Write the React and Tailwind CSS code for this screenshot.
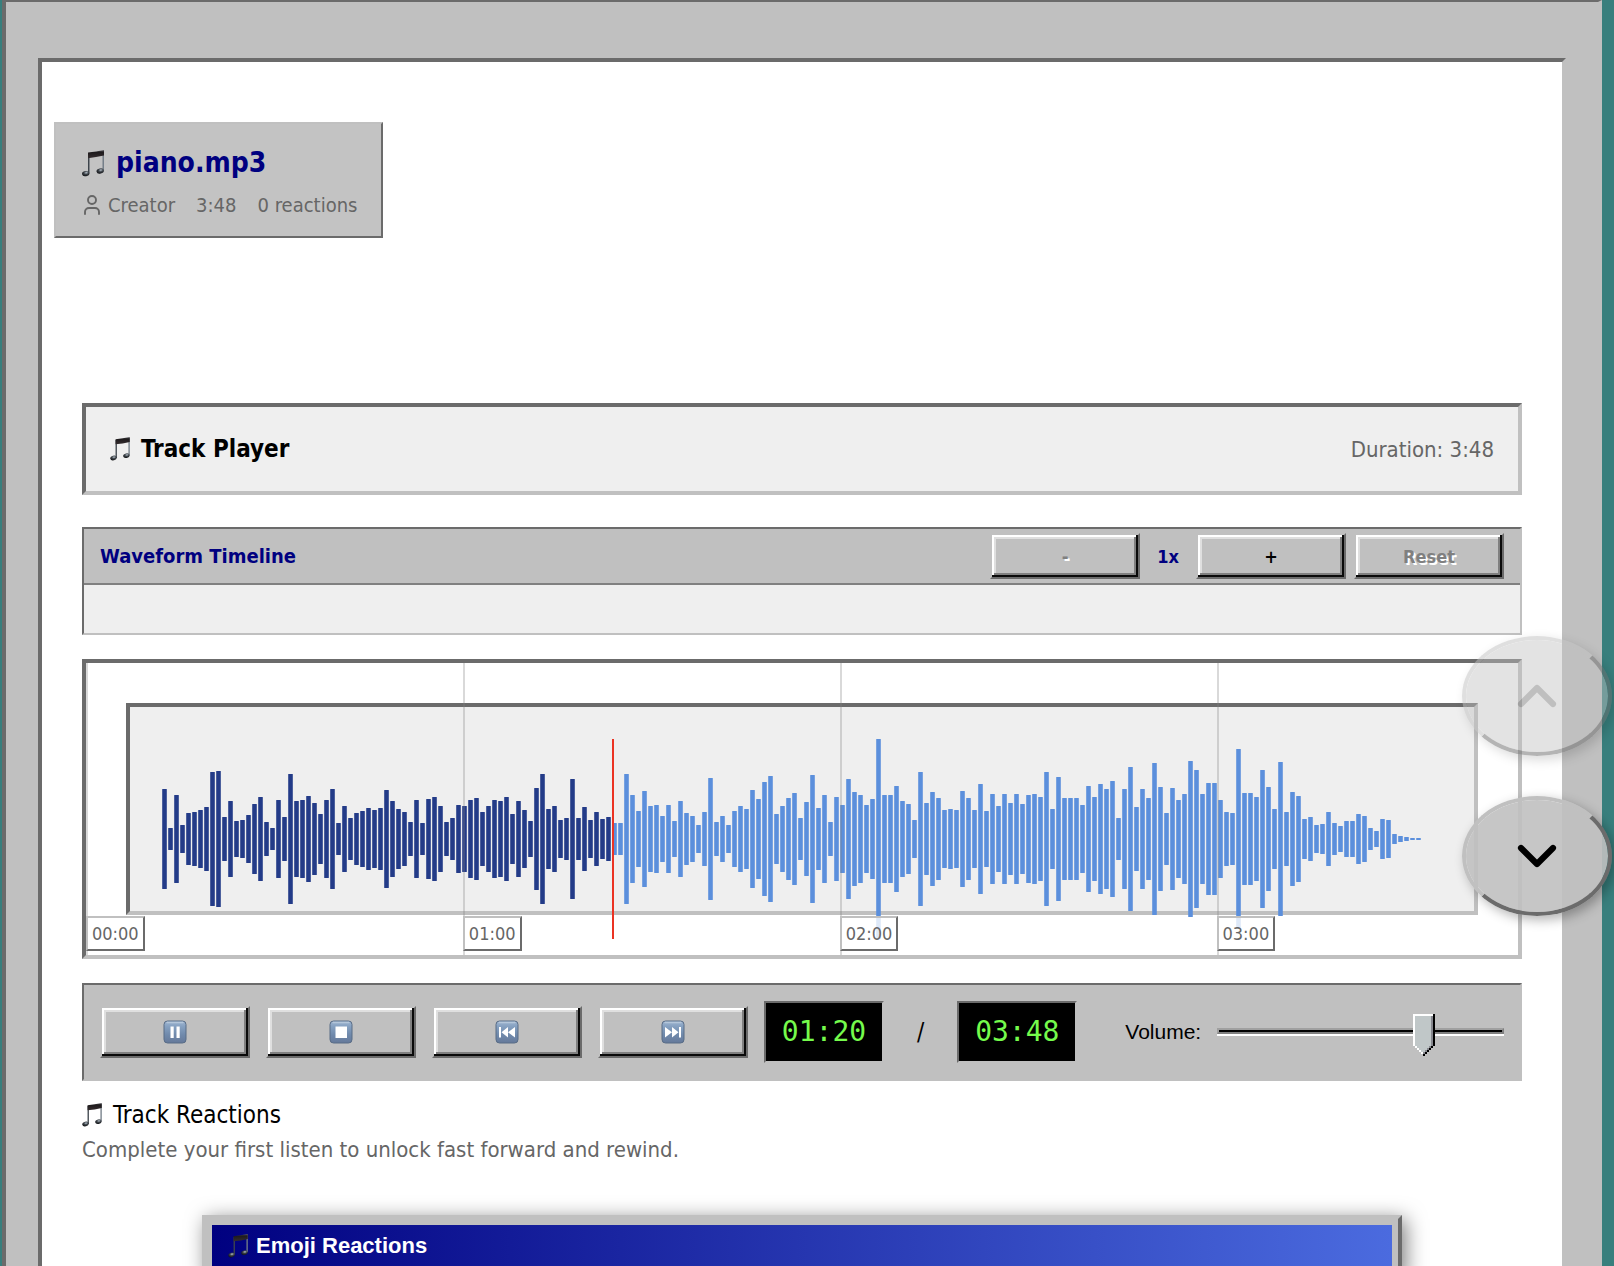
import { useState } from "react";
import { ChevronDown, ChevronUp, User } from "lucide-react";

const PEAKS = [
  50, 11, 44, 14, 26, 27, 29, 32, 67, 68, 22, 38, 18, 19, 24, 35, 42, 17, 11, 39, 22, 65, 38, 39, 43, 36, 25, 39, 50,
  16, 33, 21, 26, 28, 31, 29, 31, 49, 38, 30, 27, 17, 39, 16, 40, 42, 33, 17, 21, 34, 33, 39, 41, 27, 33, 39, 38, 42,
  25, 38, 29, 18, 51, 65, 30, 33, 19, 21, 60, 21, 32, 19, 27, 20, 22, 16, 16, 65, 44, 28, 48, 33, 34, 23, 34, 18, 38,
  26, 23, 14, 27, 61, 17, 23, 14, 28, 33, 30, 49, 40, 57, 63, 25, 33, 41, 46, 21, 37, 64, 31, 44, 17, 42, 34, 60, 47,
  44, 34, 40, 100, 44, 44, 53, 38, 35, 19, 67, 36, 47, 41, 29, 30, 29, 48, 41, 29, 55, 28, 45, 33, 45, 36, 45, 35, 44,
  45, 42, 67, 30, 62, 41, 41, 41, 34, 53, 42, 55, 50, 58, 21, 50, 72, 32, 50, 41, 76, 52, 26, 51, 39, 45, 78, 69, 45,
  56, 56, 39, 27, 26, 90, 46, 46, 42, 69, 52, 30, 77, 27, 47, 43, 20, 22, 14, 15, 27, 16, 13, 18, 18, 25, 23, 11, 8,
  20, 19, 5, 3, 2, 1, 1,
];
const PLAYED = 75;
const TRACK_SECONDS = 228;
const MARKS = [
  { label: "00:00", at: 0 },
  { label: "01:00", at: 60 },
  { label: "02:00", at: 120 },
  { label: "03:00", at: 180 },
];

function Notes({ className }) {
  return (
    <svg viewBox="0 0 22 27" className={className} aria-hidden="true">
      <defs>
        <linearGradient id="beam" x1="0" y1="0" x2="0" y2="1">
          <stop offset="0" stopColor="#6a6a70" />
          <stop offset="0.25" stopColor="#1d1a1c" />
          <stop offset="1" stopColor="#352d2f" />
        </linearGradient>
        <linearGradient id="stem" x1="0" y1="0" x2="1" y2="0">
          <stop offset="0" stopColor="#3b4249" />
          <stop offset="1" stopColor="#77818b" />
        </linearGradient>
        <radialGradient id="head" cx="0.6" cy="0.35" r="0.7">
          <stop offset="0" stopColor="#b4bec8" />
          <stop offset="0.45" stopColor="#3c4248" />
          <stop offset="1" stopColor="#0c0d0f" />
        </radialGradient>
      </defs>
      <path d="M6 3.500h1.500v20H6zM20.500 1H22v19.500h-1.500z" fill="url(#stem)" />
      <path d="M6 2.500Q14 1.800 22 0v5.600Q14 7.400 6 8.200z" fill="url(#beam)" />
      <ellipse cx="3.700" cy="23.600" rx="3.700" ry="2.600" transform="rotate(-12 3.700 23.600)" fill="url(#head)" />
      <ellipse cx="18.200" cy="21" rx="3.700" ry="2.600" transform="rotate(-12 18.200 21)" fill="url(#head)" />
    </svg>
  );
}

function KeyIcon({ children }) {
  return (
    <svg viewBox="0 0 24 24" className="size-6" aria-hidden="true">
      <defs>
        <linearGradient id="key" x1="0" y1="0" x2="0" y2="1">
          <stop offset="0" stopColor="#9db4cf" />
          <stop offset="0.25" stopColor="#86a1c1" />
          <stop offset="0.6" stopColor="#718bad" />
          <stop offset="1" stopColor="#65799a" />
        </linearGradient>
      </defs>
      <rect x="1" y="1" width="22" height="22" rx="3.500" fill="url(#key)" stroke="#586c86" />
      <path d="M4 2.500h16" stroke="#b4c6da" strokeWidth="1.500" strokeLinecap="round" />
      <g fill="#fff">{children}</g>
    </svg>
  );
}

function BevelButton({ className = "", ...props }) {
  return (
    <button
      type="button"
      className={
        "flex w-[150px] shrink-0 items-center justify-center border-2 border-t-[#c0c0c0] border-r-[#6b6b6b] border-b-[#6b6b6b] border-l-[#c0c0c0] bg-[#c0c0c0] font-bold text-black shadow-[inset_-2px_-2px_#0a0a0a,inset_2px_2px_#fff,inset_-4px_-4px_#808080,inset_4px_4px_#dfdfdf] disabled:text-[#808080] disabled:[text-shadow:2px_2px_0_#fff] " +
        className
      }
      {...props}
    />
  );
}

function Readout({ children }) {
  return (
    <output className="h-[62px] w-[120px] shrink-0 border-2 border-t-[#6b6b6b] border-r-[#c0c0c0] border-b-[#c0c0c0] border-l-[#6b6b6b] bg-black text-center font-['DejaVu_Sans_Mono',monospace] text-[28px] leading-[58px] text-[#75fb4c]">
      {children}
    </output>
  );
}

function RoundButton({ className = "", ...props }) {
  return (
    <button
      type="button"
      className={
        "flex h-[120px] w-[150px] items-center justify-center rounded-[50%] border-4 border-t-[#c0c0c0] border-r-[#6b6b6b] border-b-[#6b6b6b] border-l-[#c0c0c0] bg-[#c0c0c0]/90 bg-clip-padding text-black shadow-[4px_4px_12px_rgba(0,0,0,0.3)] " +
        className
      }
      {...props}
    />
  );
}

function VolumeSlider() {
  const [volume, setVolume] = useState(74);
  return (
    <div className="relative h-9 min-w-0 flex-1">
      <div className="h-[22px] border-b-2 border-white pt-3.5">
        <div className="h-1.5 border-2 border-t-[#a0a0a0] border-r-[#808080] border-b-[#808080] border-l-[#a0a0a0] bg-black" />
      </div>
      <div className="pointer-events-none absolute inset-y-0 right-[22px] left-0">
        <svg
          viewBox="0 0 11 21"
          className="absolute top-0 h-[42px] w-[22px]"
          style={{ left: volume + "%" }}
          shapeRendering="crispEdges"
          aria-hidden="true"
        >
          <path d="M0 0v16h1v1h1v1h1v1h1v1h1v1h1v-1h1v-1h1v-1h1v-1h1v-1h1V0z" fill="#fff" />
          <path d="M1 1v15h1v1h1v1h1v1h1v1h1v-1h1v-1h1v-1h1v-1h1V1z" fill="#c0c7c8" />
          <path d="M9 1h1v15H9v1H8v1H7v1H6v1H5v-1h1v-1h1v-1h1v-1h1z" fill="#87888f" />
          <path d="M10 0h1v16h-1v1H9v1H8v1H7v1H6v1H5v-1h1v-1h1v-1h1v-1h1v-1h1z" fill="#000" />
        </svg>
      </div>
      <input
        id="volume"
        type="range"
        value={volume}
        onChange={(e) => setVolume(Number(e.target.value))}
        className="absolute inset-0 size-full opacity-0"
      />
    </div>
  );
}

function Waveform() {
  return (
    <div className="relative border-4 border-t-[#6b6b6b] border-r-[#c0c0c0] border-b-[#c0c0c0] border-l-[#6b6b6b] bg-white p-10">
      <div className="h-[212px] border-4 border-t-[#6b6b6b] border-r-[#c0c0c0] border-b-[#c0c0c0] border-l-[#6b6b6b] bg-[#efefef] p-8">
        <svg className="block h-[200px] w-full overflow-visible" role="img" aria-label="Waveform">
          {PEAKS.map((peak, i) => (
            <rect
              key={i}
              x={i * 6 + 0.2}
              y={100 - peak}
              width="4.600"
              height={peak * 2}
              rx="0.500"
              fill={i < PLAYED ? "#233b88" : "#5b8fdc"}
            />
          ))}
          <rect x="450" y="0" width="2" height="200" fill="#eb3323" />
        </svg>
      </div>
      <div className="pointer-events-none absolute inset-0">
        {MARKS.map((mark) => (
          <div
            key={mark.label}
            className="absolute inset-y-0 border-l-2 border-[#808080]/30"
            style={{ left: (mark.at / TRACK_SECONDS) * 100 + "%" }}
          >
            <span className="absolute bottom-1 -left-0.5 border-2 border-t-[#c0c0c0] border-r-[#6b6b6b] border-b-[#6b6b6b] border-l-[#c0c0c0] bg-white/80 px-1 text-[18px] leading-[31px] text-[#666]">
              {mark.label}
            </span>
          </div>
        ))}
      </div>
    </div>
  );
}

export default function App() {
  return (
    <div className="h-screen overflow-hidden bg-[#387f7d] pr-3 pl-0.5 font-['DejaVu_Sans_Condensed','DejaVu_Sans',sans-serif]">
      <div className="border-t-2 border-r-4 border-l-4 border-t-[#6b6b6b] border-r-[#c0c0c0] border-l-[#6b6b6b] bg-[#c0c0c0] px-8 pt-14 pb-8">
        <main className="border-4 border-t-[#6b6b6b] border-r-[#c0c0c0] border-b-[#c0c0c0] border-l-[#6b6b6b] bg-white pt-[60px] pb-10">
          <header className="ml-3 w-fit border-2 border-t-[#c0c0c0] border-r-[#6b6b6b] border-b-[#6b6b6b] border-l-[#c0c0c0] bg-[#c3c3c3] px-6 pt-[18px] pb-4">
            <h1 className="flex items-center gap-3 pl-0.5 text-[28px] leading-[42px] font-bold text-[#000080]">
              <Notes className="h-[27px] w-[22px]" />
              piano.mp3
            </h1>
            <div className="mt-1.5 flex gap-[21px] text-[20px] leading-[30px] text-[#666]">
              <span className="flex items-center gap-1">
                <User className="size-6" strokeWidth={1.9} />
                Creator
              </span>
              <span>3:48</span>
              <span>0 reactions</span>
            </div>
          </header>

          <div className="px-10 pt-[165px]">
            <section className="flex items-center justify-between border-4 border-t-[#6b6b6b] border-r-[#c0c0c0] border-b-[#c0c0c0] border-l-[#6b6b6b] bg-[#efefef] p-6">
              <h2 className="flex items-center gap-[11px] text-[24px] leading-9 font-bold">
                <Notes className="h-6 w-5" />
                Track Player
              </h2>
              <span className="text-[22px] text-[#666]">Duration: 3:48</span>
            </section>

            <section className="mt-8 border-2 border-t-[#6b6b6b] border-r-[#c0c0c0] border-b-[#c0c0c0] border-l-[#6b6b6b] bg-[#efefef]">
              <div className="flex items-center gap-2 border-b-2 border-[#808080] bg-[#c0c0c0] px-4 py-1">
                <h3 className="flex-1 text-[20px] font-bold text-[#000080]">Waveform Timeline</h3>
                <BevelButton className="h-[46px] text-[18px]" aria-label="Zoom out" disabled>
                  -
                </BevelButton>
                <span className="w-10 text-center text-[18px] font-bold text-[#000080]">1x</span>
                <BevelButton className="h-[46px] text-[18px]" aria-label="Zoom in">
                  +
                </BevelButton>
                <BevelButton className="h-[46px] text-[18px]" disabled>
                  Reset
                </BevelButton>
              </div>
              <div className="h-12" />
            </section>

            <section className="mt-6">
              <Waveform />
            </section>

            <section className="mt-6 flex items-center gap-4 border-2 border-t-[#6b6b6b] border-r-[#c0c0c0] border-b-[#c0c0c0] border-l-[#6b6b6b] bg-[#c0c0c0] p-4">
              <BevelButton className="h-[52px]" aria-label="Pause">
                <KeyIcon>
                  <path d="M7.500 6.500h3.200v11.500H7.500zM13.500 6.500h3.200v11.500h-3.200z" />
                </KeyIcon>
              </BevelButton>
              <BevelButton className="h-[52px]" aria-label="Stop">
                <KeyIcon>
                  <path d="M6.500 6.500h11.500v11.500H6.500z" />
                </KeyIcon>
              </BevelButton>
              <BevelButton className="h-[52px]" aria-label="Previous">
                <KeyIcon>
                  <path d="M4 7h2v10.500H4zM13 7v10.500L6.500 12.300zM20 7v10.500l-7-5.200z" />
                </KeyIcon>
              </BevelButton>
              <BevelButton className="h-[52px]" aria-label="Next">
                <KeyIcon>
                  <path d="M18 7h2v10.500h-2zM11 7v10.500l6.500-5.200zM4 7v10.500l7-5.200z" />
                </KeyIcon>
              </BevelButton>
              <Readout>01:20</Readout>
              <span className="px-[17px] text-[24px]">/</span>
              <Readout>03:48</Readout>
              <label htmlFor="volume" className="ml-8 font-['Liberation_Sans',sans-serif] text-[21px]">
                Volume:
              </label>
              <VolumeSlider />
            </section>

            <section className="mt-4">
              <h3 className="flex items-center gap-[11px] text-[24px] leading-9">
                <Notes className="h-6 w-5" />
                Track Reactions
              </h3>
              <p className="text-[22px] leading-[34px] text-[#666]">
                Complete your first listen to unlock fast forward and rewind.
              </p>
            </section>

            <section className="mx-auto mt-12 max-w-[1200px] border-4 border-t-[#c0c0c0] border-r-[#6b6b6b] border-b-[#6b6b6b] border-l-[#c0c0c0] bg-[#c0c0c0] p-1.5 shadow-[4px_4px_20px_rgba(0,0,0,0.5)]">
              <h2 className="flex items-center gap-2 bg-linear-to-r/srgb from-[#000080] to-[#4b6bdf] pl-4 font-['Liberation_Sans',sans-serif] text-[22px] leading-[42px] font-bold text-white">
                <Notes className="h-6 w-5" />
                Emoji Reactions
              </h2>
            </section>
          </div>
        </main>
      </div>

      <nav className="fixed top-[636px] right-0.5 flex flex-col gap-10" aria-label="Page scroll">
        <RoundButton className="opacity-50" aria-label="Scroll up" disabled>
          <ChevronUp className="size-16 text-[#808080]" strokeWidth={2.3} />
        </RoundButton>
        <RoundButton aria-label="Scroll down">
          <ChevronDown className="size-16" strokeWidth={2.3} />
        </RoundButton>
      </nav>
    </div>
  );
}
